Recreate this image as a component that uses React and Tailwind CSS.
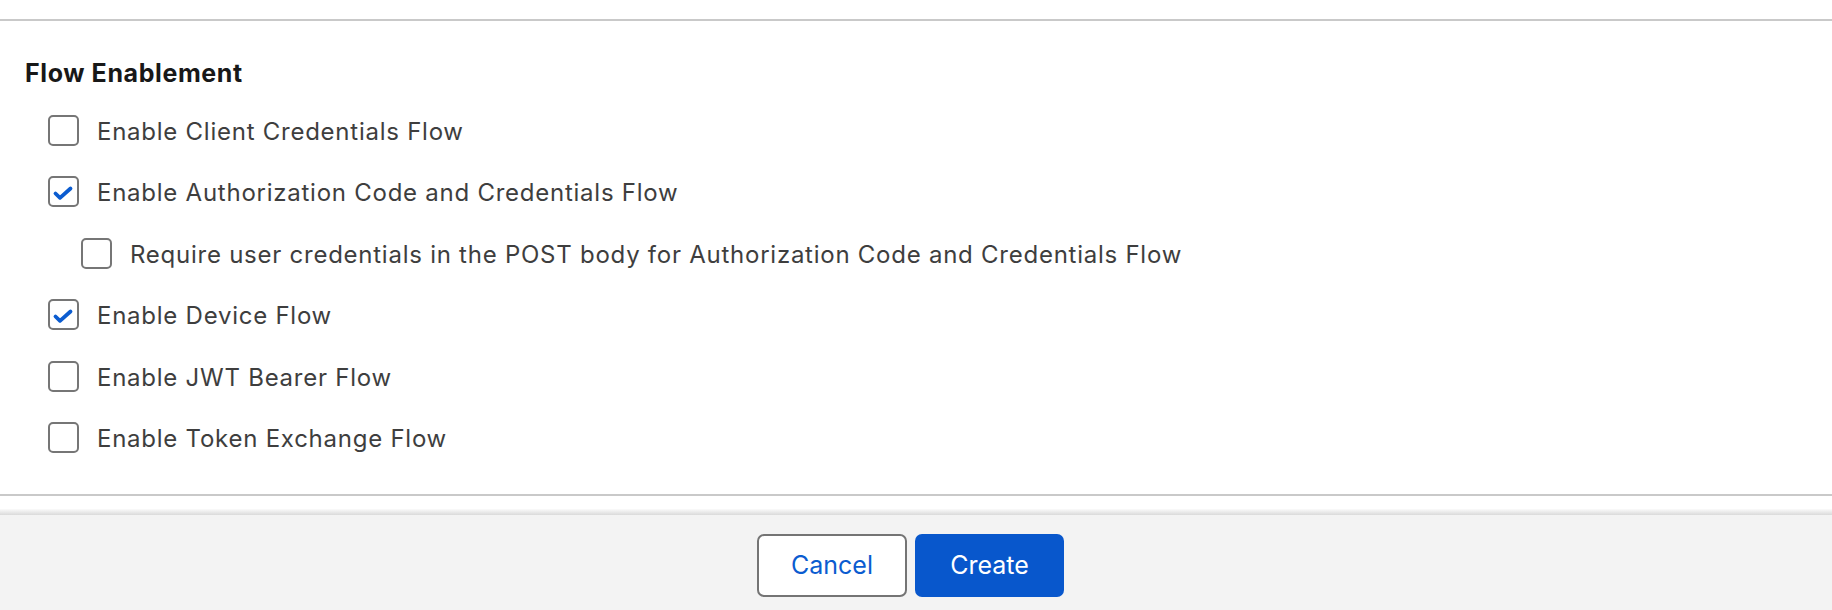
import React from "react";

function Box({ checked }) {
  return (
    <div className="w-[31px] h-[31px] shrink-0 rounded-[5px] border-2 border-[#767676] bg-white flex items-center justify-center">
      {checked && (
        <svg width="31" height="31" viewBox="0 0 31 31" className="-m-[2px]">
          <path d="M7.5 17.5 L12 21.8 L22.5 12.5" fill="none" stroke="#0b5cd0" strokeWidth="3.8" strokeLinecap="round" strokeLinejoin="round" />
        </svg>
      )}
    </div>
  );
}

function Row({ checked, label, indent }) {
  return (
    <div className={`flex items-center h-[31px] ${indent ? "pl-[33px]" : ""}`}>
      <Box checked={checked} />
      <span className="ml-[18px] text-[24px] tracking-[0.75px] text-[#3e3e3e] leading-[31px] whitespace-nowrap translate-y-[1px]">{label}</span>
    </div>
  );
}

export default function App() {
  const rows = [
    { label: "Enable Client Credentials Flow" },
    { label: "Enable Authorization Code and Credentials Flow", checked: true },
    { label: "Require user credentials in the POST body for Authorization Code and Credentials Flow", indent: true },
    { label: "Enable Device Flow", checked: true },
    { label: "Enable JWT Bearer Flow" },
    { label: "Enable Token Exchange Flow" },
  ];
  return (
    <div className="w-[1832px] h-[610px] bg-white overflow-hidden flex flex-col" style={{ fontFamily: "Inter, 'Noto Sans', sans-serif" }}>
      <div className="h-[19px] shrink-0" />
      <div className="border-t-2 border-[#c9c9c9] pt-[36.5px] pb-[40.5px] pl-[25px]">
        <div className="text-[25px] tracking-[0.6px] font-bold text-[#181818] leading-[30px]">Flow Enablement</div>
        <div className="flex flex-col gap-[30.6px] mt-[27px] pl-[23px]">
          {rows.map((r, i) => (
            <Row key={i} {...r} />
          ))}
        </div>
      </div>
      <div className="border-t-2 border-[#c9c9c9] h-[15px] shrink-0" />
      <div className="h-[6px] shrink-0 bg-gradient-to-b from-[#fbfbfb] to-[#dadada]" />
      <div className="flex-1 bg-[#f3f3f3] flex justify-center items-start pt-[19px] pr-[11px] gap-[8px]">
        <button className="w-[150px] h-[63px] rounded-[7px] border-2 border-[#747474] bg-white text-[#0b5cd0] text-[25px] leading-none">Cancel</button>
        <button className="w-[149px] h-[63px] rounded-[7px] bg-[#0857cc] text-white text-[25px] leading-none">Create</button>
      </div>
    </div>
  );
}
